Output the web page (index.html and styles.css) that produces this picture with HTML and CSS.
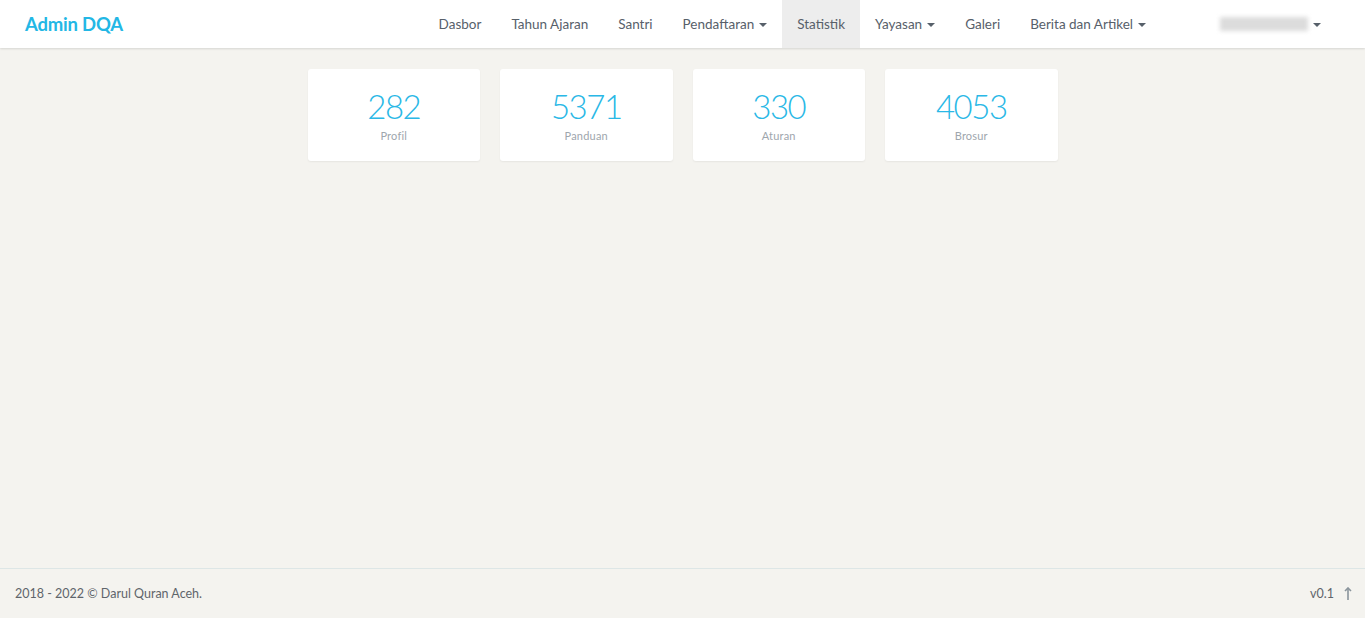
FILE: index.html
```html
<!DOCTYPE html>
<html lang="id">
<head>
<meta charset="utf-8">
<title>Admin DQA</title>
<link rel="stylesheet" href="styles.css">
</head>
<body>
<div class="page">
  <header class="navbar">
    <a class="brand" href="#">Admin DQA</a>
    <ul class="nav main-nav">
      <li><a href="#">Dasbor</a></li>
      <li><a href="#">Tahun Ajaran</a></li>
      <li><a href="#">Santri</a></li>
      <li><a href="#">Pendaftaran <span class="caret"></span></a></li>
      <li class="active"><a href="#">Statistik</a></li>
      <li><a href="#">Yayasan <span class="caret"></span></a></li>
      <li><a href="#">Galeri</a></li>
      <li><a href="#">Berita dan Artikel <span class="caret"></span></a></li>
    </ul>
    <ul class="nav user-nav">
      <li><a href="#"><span class="blurname"></span><span class="caret"></span></a></li>
    </ul>
  </header>
  <main class="content">
    <div class="stats">
      <div class="card"><div class="num">282</div><div class="label">Profil</div></div>
      <div class="card"><div class="num">5371</div><div class="label">Panduan</div></div>
      <div class="card"><div class="num">330</div><div class="label">Aturan</div></div>
      <div class="card"><div class="num">4053</div><div class="label">Brosur</div></div>
    </div>
  </main>
  <footer class="footer">
    <span>2018 - 2022 © Darul Quran Aceh.</span>
    <span class="version">v0.1 <svg class="up" width="8" height="14" viewBox="0 0 8 14"><path d="M4 1 L4 13" stroke="#8a949c" stroke-width="1.6"/><path d="M1 4 L4 1 L7 4" fill="none" stroke="#8a949c" stroke-width="1.6"/></svg></span>
  </footer>
</div>
</body>
</html>
```
FILE: styles.css
```css
* { box-sizing: border-box; }
html, body { margin: 0; padding: 0; }
body {
  background: #f4f3ef;
  font-family: "Lato", "Noto Sans", sans-serif;
  color: #555d66;
}
a { text-decoration: none; color: inherit; }
.page {
  min-height: 100vh;
  display: flex;
  flex-direction: column;
}
.navbar {
  height: 48px;
  background: #fff;
  display: flex;
  align-items: stretch;
  box-shadow: 0 1px 2px rgba(0,0,0,0.12);
  padding: 0 29px 0 25px;
  position: relative;
  z-index: 2;
}
.brand {
  display: flex;
  align-items: center;
  font-size: 18.5px;
  font-weight: 700;
  color: #23b7e5;
  letter-spacing: -0.2px;
}
.nav {
  list-style: none;
  margin: 0;
  padding: 0;
  display: flex;
}
.main-nav { margin-left: auto; }
.user-nav { margin-left: 44px; }
.nav li a {
  display: flex;
  align-items: center;
  height: 48px;
  padding: 0 15px;
  font-size: 13.5px;
  color: #57606a;
}
.nav li.active a { background: #ededed; }
.caret {
  display: inline-block;
  width: 0; height: 0;
  border-left: 4px solid transparent;
  border-right: 4px solid transparent;
  border-top: 4px solid #57606a;
  margin-left: 5px;
  margin-top: 1px;
}
.blurname {
  display: inline-block;
  width: 88px;
  height: 14px;
  background: #dcdcdc;
  filter: blur(2px);
}
.content {
  flex: 1;
  padding-top: 21px;
}
.stats {
  width: 750px;
  margin: 0 auto;
  display: grid;
  grid-template-columns: repeat(4, 1fr);
  gap: 20px;
}
.card {
  background: #fff;
  height: 92px;
  border-radius: 3px;
  box-shadow: 0 1px 2px rgba(0,0,0,0.06);
  text-align: center;
  padding-top: 18px;
}
.num {
  font-size: 33px;
  font-weight: 300;
  color: #2ab8e6;
  line-height: 38px;
  letter-spacing: -1.5px;
}
.label {
  font-size: 11px;
  color: #9ea6ad;
  margin-top: 4px;
  letter-spacing: 0.2px;
}
.footer {
  height: 50px;
  border-top: 1px solid #dde6e6;
  display: flex;
  align-items: center;
  justify-content: space-between;
  padding: 0 13px 0 15px;
  font-size: 12.5px;
  color: #5f656b;
}
.version { display: flex; align-items: center; gap: 10px; }
.up { display: block; }
```
